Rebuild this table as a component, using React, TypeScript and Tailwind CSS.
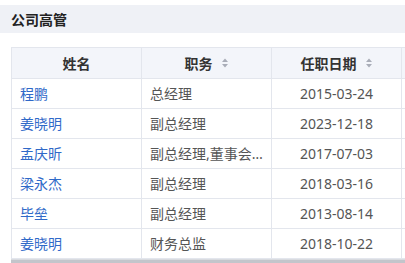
const rows = [
  { name: "程鹏", title: "总经理", date: "2015-03-24" },
  { name: "姜晓明", title: "副总经理", date: "2023-12-18" },
  { name: "孟庆昕", title: "副总经理,董事会秘书", date: "2017-07-03" },
  { name: "梁永杰", title: "副总经理", date: "2018-03-16" },
  { name: "毕垒", title: "副总经理", date: "2013-08-14" },
  { name: "姜晓明", title: "财务总监", date: "2018-10-22" },
];

function SortIcon() {
  return (
    <svg width="8" height="12" viewBox="0 0 8 12" className="ml-[8px] inline-block">
      <path d="M4 1.5 L7 5 L1 5 Z" fill="#a9adb8" />
      <path d="M4 10.5 L7 7 L1 7 Z" fill="#a9adb8" />
    </svg>
  );
}

export default function App() {
  return (
    <div
      className="h-[263px] w-[405px] overflow-hidden bg-white pt-[5px]"
      style={{ fontFamily: '"Noto Sans", "Noto Sans CJK SC", sans-serif' }}
    >
      {/* section title */}
      <div className="flex h-[28px] items-center bg-[#eff1f6] pl-[11px] text-[14px] font-bold text-[#222]">
        公司高管
      </div>

      <div className="mt-[14px] ml-[11px] w-[394px] overflow-hidden">
        <table className="w-[520px] table-fixed border-collapse text-[14px]">
          <colgroup>
            <col className="w-[130px]" />
            <col className="w-[130px]" />
            <col className="w-[130px]" />
            <col className="w-[130px]" />
          </colgroup>
          <thead>
            <tr className="h-[31px] bg-[#f3f5fa] text-[#333]">
              <th className="border border-[#e3e6ed] font-semibold">姓名</th>
              <th className="border border-[#e3e6ed] font-semibold">
                <span className="inline-flex items-center">
                  职务
                  <SortIcon />
                </span>
              </th>
              <th className="border border-[#e3e6ed] font-semibold">
                <span className="inline-flex items-center">
                  任职日期
                  <SortIcon />
                </span>
              </th>
              <th className="border border-[#e3e6ed]"></th>
            </tr>
          </thead>
          <tbody>
            {rows.map((r, i) => (
              <tr key={i} className="h-[30px] text-[#555]">
                <td className="border border-[#e3e6ed] px-[8px] text-[#2f69c8]">{r.name}</td>
                <td className="truncate border border-[#e3e6ed] px-[8px]">{r.title}</td>
                <td className="border border-[#e3e6ed] px-[8px] text-center">{r.date}</td>
                <td className="border border-[#e3e6ed] px-[8px]"></td>
              </tr>
            ))}
          </tbody>
        </table>
        {/* horizontal scrollbar */}
        <div className="h-[6px] border-t border-[#d9dbe0] bg-[#c3c5cb]"></div>
      </div>
    </div>
  );
}
